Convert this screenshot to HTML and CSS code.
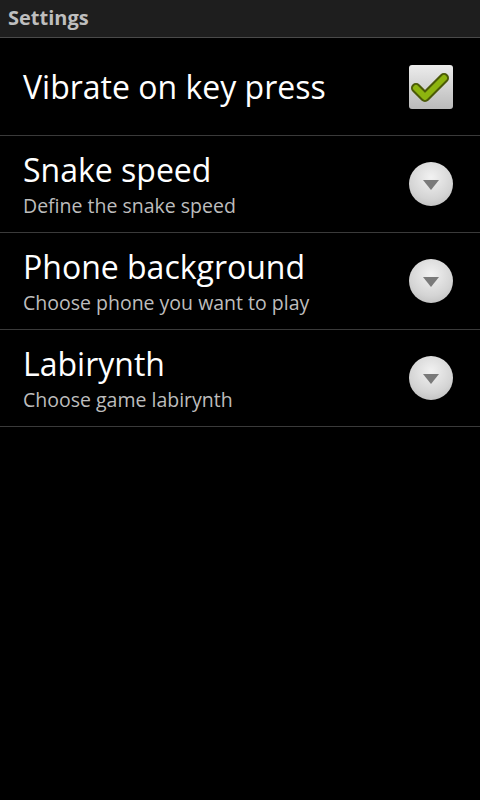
FILE: index.html
```html
<!DOCTYPE html>
<html>
<head>
    <link rel="stylesheet" href="styles.css">
</head>
<body>
    <div class="title-bar">Settings</div>
    <div class="pref-list">
        <div class="pref">
            <div class="pref-text">
                <div class="pref-title">Vibrate on key press</div>
            </div>
            <div class="checkbox">
                <svg width="44" height="44" viewBox="0 0 44 44">
                    <polyline points="7,23 16,32 35,13" fill="none" stroke="#4b5a07" stroke-width="10" stroke-linejoin="round" stroke-linecap="round"/>
                    <polyline points="7,23 16,32 35,13" fill="none" stroke="#8db40f" stroke-width="6" stroke-linejoin="round" stroke-linecap="round"/>
                </svg>
            </div>
        </div>
        <div class="pref">
            <div class="pref-text">
                <div class="pref-title">Snake speed</div>
                <div class="pref-summary">Define the snake speed</div>
            </div>
            <div class="spinner"><div class="arrow-down"></div></div>
        </div>
        <div class="pref">
            <div class="pref-text">
                <div class="pref-title">Phone background</div>
                <div class="pref-summary">Choose phone you want to play</div>
            </div>
            <div class="spinner"><div class="arrow-down"></div></div>
        </div>
        <div class="pref">
            <div class="pref-text">
                <div class="pref-title">Labirynth</div>
                <div class="pref-summary">Choose game labirynth</div>
            </div>
            <div class="spinner"><div class="arrow-down"></div></div>
        </div>
    </div>
</body>
</html>
```
FILE: styles.css
```css
body {
    margin: 0;
    background-color: #000;
    font-family: "Open Sans", "DejaVu Sans", sans-serif;
    width: 480px;
    height: 800px;
}
.title-bar {
    height: 37px;
    line-height: 36px;
    padding-left: 8px;
    background-color: #1e1e1e;
    border-bottom: 1px solid #4a4a4a;
    color: #bebebe;
    font-size: 20px;
    font-weight: bold;
}
.pref {
    display: flex;
    align-items: center;
    height: 96px;
    border-bottom: 1px solid #3a3a3a;
    padding: 0 27px 0 23px;
}
.pref:first-child {
    height: 97px;
}
.pref-text {
    flex: 1;
}
.pref-title {
    color: #fff;
    font-size: 32px;
    line-height: 38px;
}
.pref-summary {
    color: #bdbdbd;
    font-size: 19.5px;
    line-height: 24px;
    margin-top: 5px;
}
.checkbox {
    width: 44px;
    height: 44px;
    border-radius: 3px;
    background: linear-gradient(#ececec, #bababa);
}
.spinner {
    width: 44px;
    height: 44px;
    border-radius: 50%;
    background: radial-gradient(circle at 50% 35%, #f2f2f2, #d4d4d4 60%, #b4b4b4);
    display: flex;
    justify-content: center;
    align-items: center;
}
.arrow-down {
    width: 0;
    height: 0;
    border-left: 8px solid transparent;
    border-right: 8px solid transparent;
    border-top: 10px solid #7a7a7a;
    margin-top: 2px;
}
```
